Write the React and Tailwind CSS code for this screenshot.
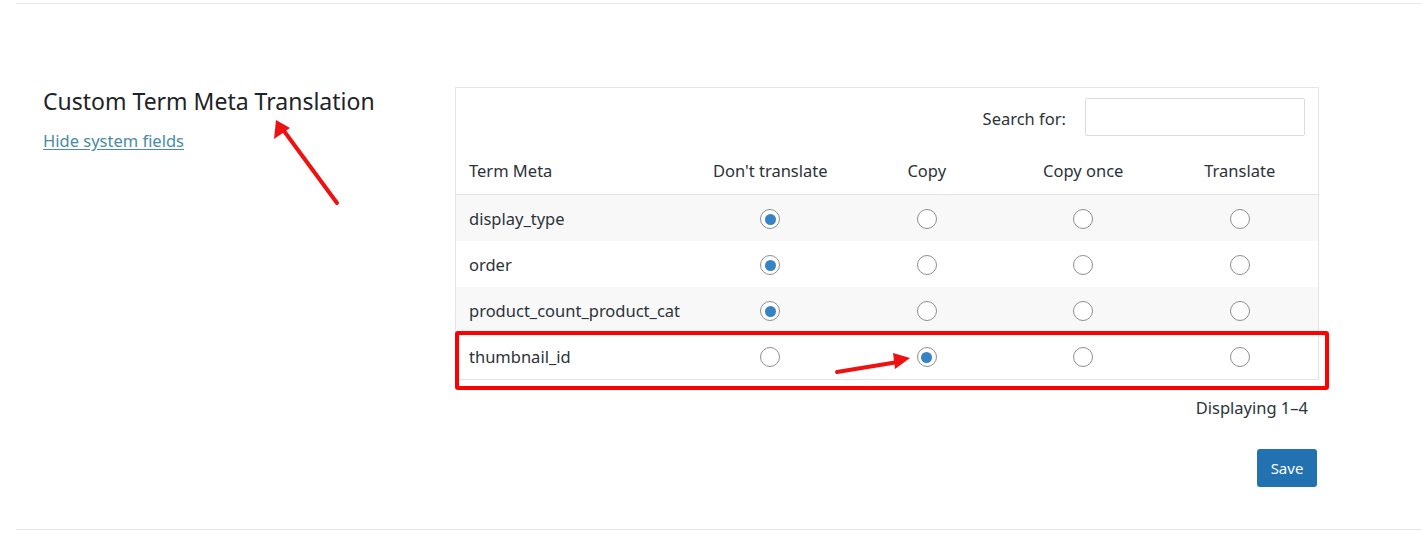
import React from 'react'

const rows = [
    { name: 'display_type', value: 0 },
    { name: 'order', value: 0 },
    { name: 'product_count_product_cat', value: 0 },
    { name: 'thumbnail_id', value: 1 },
]

const columns = ["Don't translate", 'Copy', 'Copy once', 'Translate']

function Radio({ checked }) {
    return (
        <span className="w-[20px] h-[20px] rounded-full border border-[#8c8f94] bg-white flex items-center justify-center">
            {checked && <span className="w-[11px] h-[11px] rounded-full bg-[#3582c4]" />}
        </span>
    )
}

export default function App() {
    return (
        <div className="relative w-[1422px] h-[548px] bg-white text-[#2c3338]" style={{ fontFamily: '"Noto Sans", "Open Sans", sans-serif' }}>
            <div className="ml-4 pt-[3px]">
                <div className="border-t border-[#e8e8e8]" />
            </div>

            <div className="flex pt-[83px] ml-4">
                <div className="w-[439px] pl-[27px]">
                    <h2 className="text-[23px] leading-[28px] text-[#1d2327]">Custom Term Meta Translation</h2>
                    <a href="#" className="block mt-[15px] text-[16.5px] leading-[22px] text-[#4a8ba5] underline underline-offset-2">Hide system fields</a>
                </div>

                <div className="w-[864px]">
                    <div className="border border-[#e2e4e7]">
                        <div className="flex justify-end items-center gap-[19px] pt-[10px] pr-[13px]">
                            <span className="text-[16.5px] pt-[4px]">Search for:</span>
                            <input className="w-[220px] h-[38px] border border-[#dcdcde] rounded-[2px]" />
                        </div>
                        <div className="grid grid-cols-[236px_repeat(4,1fr)] h-[47px] mt-[12px] items-center border-b border-[#e2e4e7] text-[16.5px]">
                            <div className="pl-[13px]">Term Meta</div>
                            {columns.map(c => (
                                <div key={c} className="text-center">{c}</div>
                            ))}
                        </div>
                        {rows.map((r, i) => (
                            <div key={r.name} className={`grid grid-cols-[236px_repeat(4,1fr)] h-[46px] items-center text-[16.5px] ${i % 2 === 0 ? 'bg-[#f8f8f8]' : 'bg-white'}`}>
                                <div className="pl-[13px] pt-[2px]">{r.name}</div>
                                {columns.map((c, j) => (
                                    <div key={c} className="flex justify-center pt-[2px]">
                                        <Radio checked={r.value === j} />
                                    </div>
                                ))}
                            </div>
                        ))}
                    </div>
                    <div className="flex justify-end pr-[11px] mt-[17px] text-[16.5px] leading-[22px]">Displaying 1–4</div>
                    <div className="flex justify-end pr-[2px] mt-[30px]">
                        <button className="w-[60px] h-[38px] rounded-[3px] bg-[#2271b1] text-white text-[15px]">Save</button>
                    </div>
                </div>
            </div>

            <div className="absolute left-4 right-0 top-[529px] border-t border-[#e8e8e8]" />

            {/* annotations */}
            <div className="absolute left-[455px] top-[331px] w-[874px] h-[59px] border-[4px] border-[#ff0000] rounded-[3px]" />
            <svg className="absolute inset-0 pointer-events-none" width="1422" height="548">
                <line x1="337" y1="203" x2="284" y2="131" stroke="#ee1111" strokeWidth="4" strokeLinecap="round" />
                <polygon points="276,120 274,139 290,128" fill="#ee1111" />
                <line x1="837" y1="372" x2="898" y2="362" stroke="#ee1111" strokeWidth="4" strokeLinecap="round" />
                <polygon points="910,358 893,353 895,369" fill="#ee1111" />
            </svg>
        </div>
    )
}
